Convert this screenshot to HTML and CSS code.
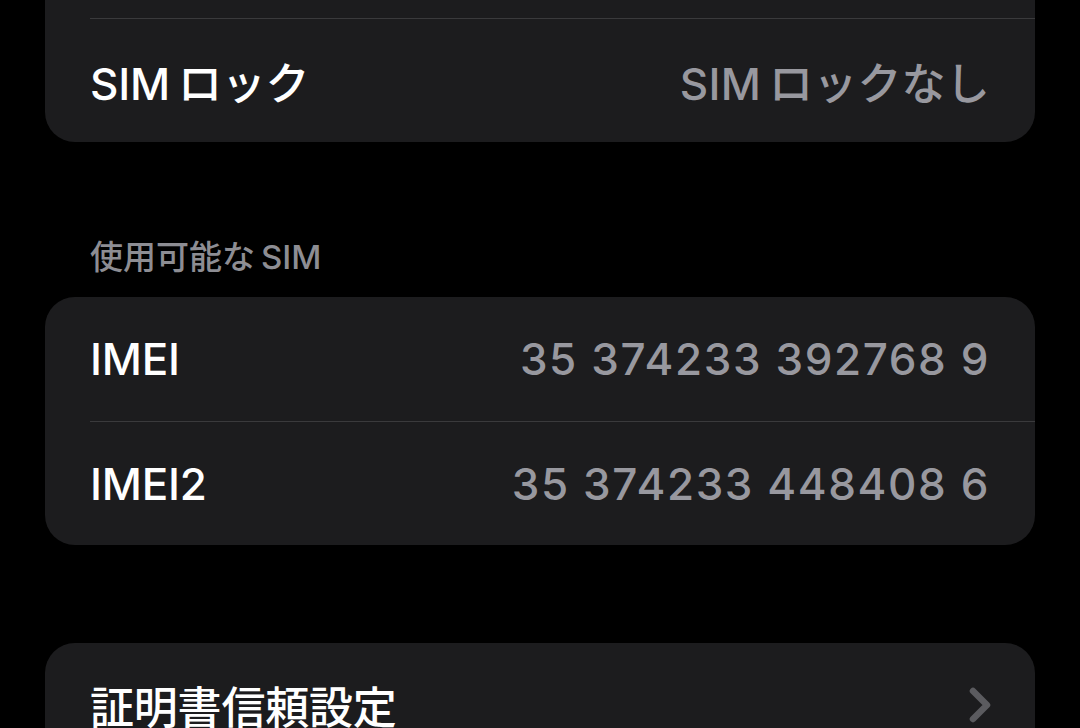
FILE: index.html
```html
<!DOCTYPE html>
<html lang="ja">
<head>
  <meta charset="UTF-8" />
  <meta name="viewport" content="width=device-width, initial-scale=1.0"/>
  <title>情報</title>
  <link rel="stylesheet" href="styles.css">
</head>
<body>
  <div class="page">
    <!-- 上のグループ（上端は切れている） -->
    <div class="card card-top">
      <div class="row row-cut"></div>
      <div class="row">
        <span class="label"><span class="latin">SIM</span>ロック</span>
        <span class="value"><span class="latin">SIM</span>ロックなし</span>
      </div>
    </div>

    <h3 class="section-title">使用可能な<span class="latin-before">SIM</span></h3>
    <div class="card">
      <div class="row">
        <span class="label">IMEI</span>
        <span class="value digits">35 374233 392768 9</span>
      </div>
      <div class="row">
        <span class="label">IMEI2</span>
        <span class="value digits">35 374233 448408 6</span>
      </div>
    </div>

    <div class="card card-link">
      <div class="row">
        <span class="label">証明書信頼設定</span>
        <svg class="chevron" width="24" height="36" viewBox="0 0 24 36">
          <polyline points="5,4 19,18 5,32" fill="none" stroke="#5b5b5f" stroke-width="6.5" stroke-linecap="round" stroke-linejoin="round"/>
        </svg>
      </div>
    </div>
  </div>
</body>
</html>
```

FILE: styles.css
```css
html, body {
  margin: 0;
  padding: 0;
  background-color: #000;
  height: 100%;
  overflow: hidden;
}

body {
  font-family: Inter, "Noto Sans CJK JP", sans-serif;
  color: #fff;
}

.page {
  padding: 0 45px;
}

.card {
  background-color: #1c1c1e;
  border-radius: 30px;
  padding-left: 45px;
}

.card-top {
  margin-top: -40px;
}

.row {
  box-sizing: border-box;
  height: 124px;
  display: flex;
  align-items: center;
  justify-content: space-between;
  padding-right: 45px;
}

.row + .row {
  border-top: 1.5px solid #3a3a3c;
}

.row-cut {
  height: 58px;
}

.label {
  font-size: 44px;
  font-weight: 500;
  letter-spacing: -0.2px;
}

.value {
  font-size: 44px;
  font-weight: 500;
  color: #98989f;
  letter-spacing: 0.2px;
}

.value.digits {
  letter-spacing: 1.6px;
}

.latin {
  margin-right: 8px;
}

.latin-before {
  margin-left: 6px;
}

.section-title {
  margin: 95px 0 20px 45px;
  height: 40px;
  line-height: 40px;
  font-size: 33px;
  font-weight: 500;
  color: #8d8d93;
}

.card-link {
  margin-top: 98px;
}

.chevron {
  margin-right: -2px;
}
```
